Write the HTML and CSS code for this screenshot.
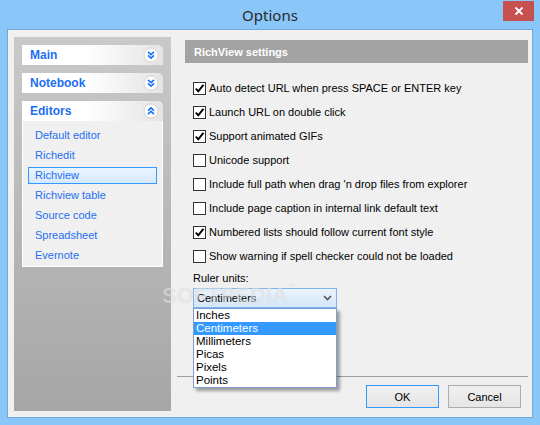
FILE: index.html
```html
<!DOCTYPE html>
<html>
<head>
<meta charset="utf-8">
<link rel="stylesheet" href="styles.css">
</head>
<body>
<div class="window">
  <div class="titlebar">
    <span class="title">Options</span>
    <div class="close"><svg width="10" height="10" viewBox="0 0 10 10"><path d="M1.5 1.5 L8.5 8.5 M8.5 1.5 L1.5 8.5" stroke="#fff" stroke-width="1.8"/></svg></div>
  </div>
  <div class="client">
    <aside class="sidebar">
      <div class="section">
        <div class="sec-head"><span>Main</span>
          <svg class="chev" width="16" height="16" viewBox="0 0 16 16"><circle cx="8" cy="8" r="7" fill="#fff" stroke="#d4d4d4"/><path d="M5 4.8 L8 7.6 L11 4.8 M5 8.4 L8 11.2 L11 8.4" fill="none" stroke="#1c6ef2" stroke-width="1.6"/></svg>
        </div>
      </div>
      <div class="section">
        <div class="sec-head"><span>Notebook</span>
          <svg class="chev" width="16" height="16" viewBox="0 0 16 16"><circle cx="8" cy="8" r="7" fill="#fff" stroke="#d4d4d4"/><path d="M5 4.8 L8 7.6 L11 4.8 M5 8.4 L8 11.2 L11 8.4" fill="none" stroke="#1c6ef2" stroke-width="1.6"/></svg>
        </div>
      </div>
      <div class="section">
        <div class="sec-head"><span>Editors</span>
          <svg class="chev" width="16" height="16" viewBox="0 0 16 16"><circle cx="8" cy="8" r="7" fill="#fff" stroke="#d4d4d4"/><path d="M5 7.6 L8 4.8 L11 7.6 M5 11.2 L8 8.4 L11 11.2" fill="none" stroke="#1c6ef2" stroke-width="1.6"/></svg>
        </div>
        <ul class="sec-body">
          <li><span>Default editor</span></li>
          <li><span>Richedit</span></li>
          <li class="sel"><span>Richview</span></li>
          <li><span>Richview table</span></li>
          <li><span>Source code</span></li>
          <li><span>Spreadsheet</span></li>
          <li><span>Evernote</span></li>
        </ul>
      </div>
    </aside>
    <main class="content">
      <div class="settings">
        <div class="panel-head">RichView settings</div>
        <div class="options">
          <div class="opt"><span class="cb"><svg width="11" height="11" viewBox="0 0 11 11"><path d="M1.8 5.6 L4.3 8.3 L9.4 1.8" fill="none" stroke="#000" stroke-width="2"/></svg></span>Auto detect URL when press SPACE or ENTER key</div>
          <div class="opt"><span class="cb"><svg width="11" height="11" viewBox="0 0 11 11"><path d="M1.8 5.6 L4.3 8.3 L9.4 1.8" fill="none" stroke="#000" stroke-width="2"/></svg></span>Launch URL on double click</div>
          <div class="opt"><span class="cb"><svg width="11" height="11" viewBox="0 0 11 11"><path d="M1.8 5.6 L4.3 8.3 L9.4 1.8" fill="none" stroke="#000" stroke-width="2"/></svg></span>Support animated GIFs</div>
          <div class="opt"><span class="cb"></span>Unicode support</div>
          <div class="opt"><span class="cb"></span>Include full path when drag 'n drop files from explorer</div>
          <div class="opt"><span class="cb"></span>Include page caption in internal link default text</div>
          <div class="opt"><span class="cb"><svg width="11" height="11" viewBox="0 0 11 11"><path d="M1.8 5.6 L4.3 8.3 L9.4 1.8" fill="none" stroke="#000" stroke-width="2"/></svg></span>Numbered lists should follow current font style</div>
          <div class="opt"><span class="cb"></span>Show warning if spell checker could not be loaded</div>
        </div>
        <div class="ruler-label">Ruler units:</div>
        <div class="combo-wrap">
          <div class="combo"><span>Centimeters</span>
            <svg width="9" height="6" viewBox="0 0 9 6"><path d="M1 1 L4.5 4.5 L8 1" fill="none" stroke="#555" stroke-width="1.6"/></svg>
          </div>
          <ul class="dropdown">
            <li>Inches</li>
            <li class="hl">Centimeters</li>
            <li>Millimeters</li>
            <li>Picas</li>
            <li>Pixels</li>
            <li>Points</li>
          </ul>
        </div>
        <div class="watermark">SOFTPEDIA<sup>™</sup></div>
      </div>
      <div class="buttons">
        <button class="btn default">OK</button>
        <button class="btn">Cancel</button>
      </div>
    </main>
  </div>
</div>
</body>
</html>
```
FILE: styles.css
```css
html, body {
  margin: 0;
  padding: 0;
}
body {
  width: 540px;
  height: 425px;
  overflow: hidden;
  font-family: "Liberation Sans", Arial, sans-serif;
  font-size: 11px;
  color: #000;
}
.window {
  position: relative;
  width: 540px;
  height: 425px;
  box-sizing: border-box;
  background: #8bc6f8;
  padding: 0 7px 7px;
  display: flex;
  flex-direction: column;
}
.titlebar {
  height: 29px;
  display: flex;
  align-items: center;
  justify-content: center;
  font-family: "Noto Sans", "Open Sans", sans-serif;
  font-size: 15px;
  color: #2a2a2a;
}
.title {
  margin-top: 1px;
}
.close {
  position: absolute;
  top: 1px;
  right: 6px;
  width: 31px;
  height: 20px;
  background: #c75050;
  display: flex;
  align-items: center;
  justify-content: center;
}
.client {
  flex: 1;
  display: flex;
  border: 1px solid #70a8dc;
  background: #f0f0f0;
  min-height: 0;
}

/* Sidebar */
.sidebar {
  width: 157px;
  box-sizing: border-box;
  margin: 7px 0 6px 6px;
  padding: 8px;
  background: linear-gradient(#c9c9c9, #a6a6a6);
  display: flex;
  flex-direction: column;
  gap: 8px;
}
.sec-head {
  height: 20px;
  display: flex;
  align-items: center;
  justify-content: space-between;
  padding: 0 4px 0 8px;
  background: linear-gradient(90deg, #ffffff 0%, #ffffff 45%, #e4e4e4 100%);
  border-radius: 0 5px 0 0;
  font-weight: bold;
  font-size: 12px;
  color: #1c6ef2;
}
.chev {
  display: block;
}
.sec-body {
  list-style: none;
  margin: 0;
  padding: 4px 0 1px;
  background: #f0f0f0;
  border: 1px solid #fff;
  border-top: 0;
}
.sec-body li {
  height: 20px;
  display: flex;
  align-items: center;
  padding: 0 5px;
  color: #1f6ff0;
}
.sec-body li span {
  flex: 1;
  height: 17px;
  box-sizing: border-box;
  border: 1px solid transparent;
  padding-left: 6px;
  line-height: 15px;
}
.sec-body li.sel span {
  border-color: #3399ff;
  background: linear-gradient(#eaf4ff, #d6e9fd);
}

/* Content */
.content {
  flex: 1;
  margin: 0 4px 0 6px;
  display: flex;
  flex-direction: column;
}
.settings {
  flex: 1;
  position: relative;
  padding-top: 10px;
  border-bottom: 1px solid #a0a0a0;
}
.panel-head {
  margin-left: 8px;
  height: 23px;
  background: #a3a3a3;
  color: #fff;
  font-weight: bold;
  padding-left: 9px;
  display: flex;
  align-items: center;
}
.options {
  margin: 13px 0 0 16px;
}
.opt {
  height: 24px;
  display: flex;
  align-items: center;
}
.cb {
  width: 13px;
  height: 13px;
  box-sizing: border-box;
  border: 1px solid #333;
  background: #fff;
  margin-right: 3px;
  display: flex;
  align-items: center;
  justify-content: center;
}
.cb svg {
  display: block;
}
.ruler-label {
  margin-left: 16px;
  height: 20px;
  line-height: 20px;
}
.combo-wrap {
  position: relative;
  margin-left: 16px;
  width: 144px;
}
.combo {
  height: 20px;
  box-sizing: border-box;
  border: 1px solid #7eb4ea;
  background: linear-gradient(#ecf4fc, #d3e7f9);
  display: flex;
  align-items: center;
  justify-content: space-between;
  padding: 0 4px 0 3px;
}
.combo svg {
  display: block;
}
.dropdown {
  position: absolute;
  top: 100%;
  left: 0;
  width: 144px;
  box-sizing: border-box;
  margin: 0;
  padding: 0;
  list-style: none;
  background: #fff;
  border: 1px solid #7a9ed4;
  box-shadow: 3px 3px 3px rgba(0, 0, 0, 0.35);
  z-index: 2;
}
.dropdown li {
  height: 13px;
  line-height: 13px;
  padding-left: 2px;
  font-size: 11.5px;
}
.dropdown li.hl {
  background: #3399ff;
  color: #fff;
}
.watermark {
  position: absolute;
  left: -15px;
  top: 253px;
  font-size: 22px;
  font-weight: bold;
  color: rgba(255, 255, 255, 0.5);
  text-shadow: 0 0 1px rgba(0, 0, 0, 0.15);
  z-index: 1;
  pointer-events: none;
}
.watermark sup {
  font-size: 7px;
  vertical-align: top;
}
.buttons {
  height: 40px;
  display: flex;
  justify-content: flex-end;
  align-items: flex-start;
  padding: 8px 7px 0 0;
  box-sizing: border-box;
  gap: 9px;
}
.btn {
  width: 73px;
  height: 23px;
  margin: 0;
  padding: 0;
  font-family: "Liberation Sans", Arial, sans-serif;
  font-size: 11px;
  color: #000;
  border: 1px solid #acacac;
  background: linear-gradient(#f0f0f0, #e5e5e5);
}
.btn.default {
  border-color: #3399ff;
}
```
